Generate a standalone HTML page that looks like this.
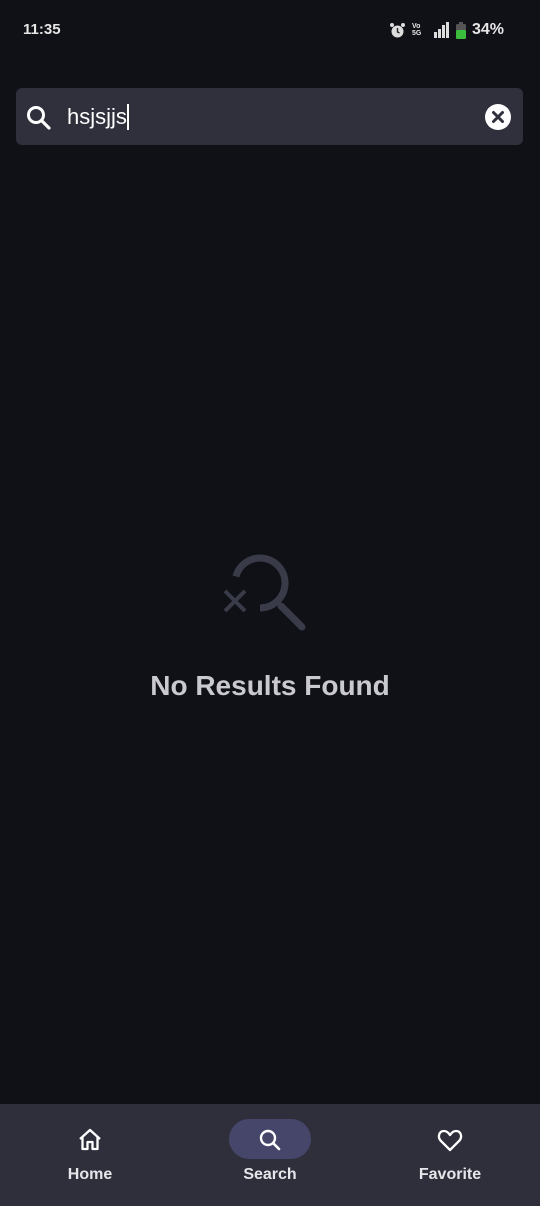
<!DOCTYPE html>
<html><head><meta charset="utf-8"><style>
html,body{margin:0;padding:0;width:540px;height:1206px;background:#101116;overflow:hidden;font-family:"Liberation Sans",sans-serif;color:#e8e8ee}
.abs{position:absolute}
</style></head><body>
<div class="abs" style="left:23px;top:21px;font-size:15px;font-weight:bold;color:#e6e6e6">11:35</div>
<div class="abs" style="left:389px;top:21px;font-size:16px;font-weight:bold;color:#e6e6e6;display:flex;align-items:center;gap:6px">
<svg width="17" height="17" viewBox="0 0 17 17"><circle cx="8.5" cy="9.5" r="6" fill="#ddd"/><path d="M8.5 6v4l2 1" stroke="#222" stroke-width="1.4" fill="none"/><circle cx="3" cy="3" r="2" fill="#ddd"/><circle cx="14" cy="3" r="2" fill="#ddd"/></svg>
<span style="font-size:7px;line-height:7px;width:10px">Vo<br>5G</span>
<svg width="22" height="16" viewBox="0 0 22 16"><rect x="6" y="10" width="3" height="6" fill="#ddd"/><rect x="10" y="7" width="3" height="9" fill="#ddd"/><rect x="14" y="3" width="3" height="13" fill="#ddd"/><rect x="18" y="0" width="3" height="16" fill="#ddd"/></svg>
<svg width="10" height="17" viewBox="0 0 10 17"><rect x="0" y="2" width="10" height="15" rx="1.5" fill="#555"/><rect x="0" y="8" width="10" height="9" rx="1.5" fill="#3cbc3c"/><rect x="3" y="0" width="4" height="2" fill="#555"/></svg>
<span>34%</span></div>
<div class="abs" style="left:16px;top:88px;width:507px;height:57px;background:#2f303c;border-radius:6px"></div>
<svg class="abs" style="left:25px;top:104px" width="28" height="28" viewBox="0 0 28 28"><circle cx="11" cy="11" r="7.5" stroke="#fff" stroke-width="3" fill="none"/><path d="M16.5 16.5L24 24" stroke="#fff" stroke-width="3.2" stroke-linecap="round"/></svg>
<div class="abs" style="left:67px;top:104px;font-size:22px;color:#fff">hsjsjjs<span style="display:inline-block;width:2px;height:26px;background:#fff;vertical-align:-6px"></span></div>
<svg class="abs" style="left:484px;top:103px" width="28" height="28" viewBox="0 0 28 28"><circle cx="14" cy="14" r="13" fill="#fff"/><path d="M9.5 9.5L18.5 18.5M18.5 9.5L9.5 18.5" stroke="#2f303c" stroke-width="3" stroke-linecap="round"/></svg>
<svg class="abs" style="left:210px;top:545px" width="110" height="100" viewBox="0 0 110 100"><path d="M50 63 A25 25 0 1 0 25.9 31.5" stroke="#3a3b49" stroke-width="7" fill="none"/><path d="M71 61L92 82" stroke="#3a3b49" stroke-width="7" stroke-linecap="round"/><path d="M15 46L35 66M35 46L15 66" stroke="#3a3b49" stroke-width="4"/></svg>
<div class="abs" style="left:0;width:540px;top:670px;text-align:center;font-size:28px;font-weight:bold;color:#c9c9cf">No Results Found</div>
<div class="abs" style="left:0;top:1104px;width:540px;height:102px;background:#2e2f3b"></div>
<svg class="abs" style="left:76px;top:1127px" width="28" height="26" viewBox="0 0 28 26"><path d="M4 12L14 3L24 12M6.5 10v12h5v-7h5v7h5V10" stroke="#fff" stroke-width="2.3" fill="none" stroke-linejoin="round"/></svg>
<div class="abs" style="left:229px;top:1119px;width:82px;height:40px;border-radius:20px;background:#45466a"></div>
<svg class="abs" style="left:256px;top:1126px" width="28" height="28" viewBox="0 0 28 28"><circle cx="12" cy="12" r="7" stroke="#fff" stroke-width="2.4" fill="none"/><path d="M17 17L23 23" stroke="#fff" stroke-width="2.6" stroke-linecap="round"/></svg>
<svg class="abs" style="left:436px;top:1126px" width="28" height="28" viewBox="0 0 28 28"><path d="M14 24L4.5 14.5C1.5 11 3 5 8 5c3 0 4.5 2 6 4c1.5-2 3-4 6-4c5 0 6.5 6 3.5 9.5Z" stroke="#fff" stroke-width="2.3" fill="none" stroke-linejoin="round"/></svg>
<div class="abs" style="left:0;width:180px;top:1166px;text-align:center;font-size:16px;font-weight:bold;color:#e6e6ea">Home</div>
<div class="abs" style="left:180px;width:180px;top:1166px;text-align:center;font-size:16px;font-weight:bold;color:#e6e6ea">Search</div>
<div class="abs" style="left:360px;width:180px;top:1166px;text-align:center;font-size:16px;font-weight:bold;color:#e6e6ea">Favorite</div>
</body></html>
